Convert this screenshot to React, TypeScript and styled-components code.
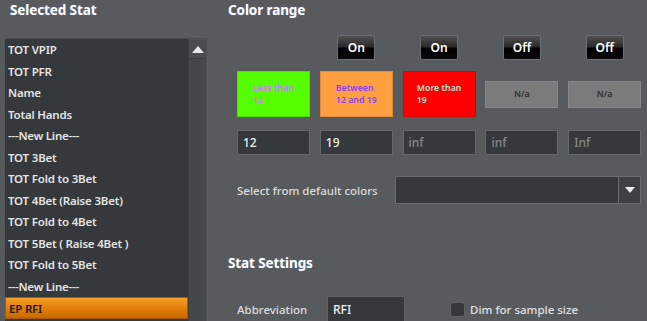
import React from "react";
import styled, { createGlobalStyle } from "styled-components";

const Global = createGlobalStyle`
  html, body { margin: 0; padding: 0; background: #585b5e; }
  body { font-family: "Noto Sans", "Open Sans", sans-serif; color: #e6e6e6; overflow: hidden; }
  * { box-sizing: border-box; }
`;

const Page = styled.div`
  display: flex;
  width: 647px;
  height: 321px;
  background: #585b5e;
  overflow: hidden;
`;

const LeftPanel = styled.div`
  width: 208px;
  display: flex;
  flex-direction: column;
  padding-left: 5px;
`;

const Title = styled.div`
  font-size: 13.5px;
  font-weight: 700;
  color: #ffffff;
  height: 38px;
  line-height: 20px;
  padding: 0 0 0 5px;
  text-shadow: 0 0 2px rgba(120, 160, 255, 0.35);
  letter-spacing: -0.1px;
`;

const ListBox = styled.div`
  display: flex;
  flex: 1;
  border-top: 1px solid #4a4d50;
`;

const List = styled.div`
  width: 183px;
  background: #36393c;
  display: flex;
  flex-direction: column;
`;

const Row = styled.div<{ $selected?: boolean }>`
  height: 21.5px;
  line-height: 21.5px;
  padding-left: 3px;
  font-size: 11.5px;
  font-weight: 600;
  color: ${(p) => (p.$selected ? "#1f1a12" : "#e4e4e4")};
  background: ${(p) =>
    p.$selected ? "linear-gradient(#f6a02a, #e07d06 55%, #c96800)" : "transparent"};
  border: ${(p) => (p.$selected ? "1px solid #a85800" : "none")};
  white-space: nowrap;
  letter-spacing: -0.2px;
`;

const Scrollbar = styled.div`
  width: 19px;
  background: #45484b;
  border-left: 1px solid #3c3f42;
  border-right: 1px solid #505356;
  display: flex;
  flex-direction: column;
`;

const ScrollButton = styled.div`
  height: 20px;
  border-bottom: 1px solid #3a3d40;
  border-top: 1px solid #4f5255;
  background: #4a4d50;
  display: flex;
  align-items: center;
  justify-content: center;
`;

const RightPanel = styled.div`
  flex: 1;
  padding-left: 20px;
  display: flex;
  flex-direction: column;
`;

const SectionTitle = styled(Title)`
  padding-left: 0;
  height: auto;
`;

const Indent = styled.div`
  padding-left: 9px;
`;

const Grid = styled.div<{ $top: number; $height: number }>`
  display: grid;
  grid-template-columns: repeat(5, 73px);
  column-gap: 9.8px;
  margin-top: ${(p) => p.$top}px;
  height: ${(p) => p.$height}px;
  align-items: center;
`;

const Cell = styled.div`
  display: flex;
  justify-content: center;
  align-items: center;
`;

const ToggleButton = styled.div`
  width: 38px;
  height: 25px;
  border: 1px solid #6c6f72;
  border-radius: 2px;
  background: linear-gradient(#505050 0%, #2c2c2c 45%, #000 55%, #0a0a0a 100%);
  color: #fff;
  font-size: 12px;
  font-weight: 600;
  display: flex;
  align-items: center;
  justify-content: center;
`;

const Swatch = styled.div<{ $bg: string; $fg: string; $na?: boolean }>`
  width: 73px;
  height: ${(p) => (p.$na ? 27 : 46)}px;
  background: ${(p) => p.$bg};
  color: ${(p) => p.$fg};
  border: 1px solid ${(p) => (p.$na ? "#858789" : "rgba(0,0,0,0.12)")};
  font-size: 8.8px;
  font-weight: 600;
  line-height: 12px;
  display: flex;
  align-items: center;
  justify-content: center;
`;

const SwatchText = styled.div`
  text-align: left;
`;

const Input = styled.div<{ $placeholder?: boolean; $width?: number }>`
  width: ${(p) => p.$width ?? 73}px;
  height: 25px;
  background: #36393c;
  border: 1px solid #66696c;
  color: ${(p) => (p.$placeholder ? "#85888b" : "#f0f0f0")};
  font-size: 12px;
  font-weight: 500;
  padding-left: 5px;
  display: flex;
  align-items: center;
`;

const SelectRow = styled.div`
  display: flex;
  align-items: center;
  margin-top: 21px;
  height: 28px;
`;

const Label = styled.div<{ $width: number }>`
  width: ${(p) => p.$width}px;
  font-size: 11.5px;
  color: #dcdcdc;
  font-weight: 500;
`;

const Dropdown = styled.div`
  width: 246px;
  height: 28px;
  background: #36393c;
  border: 1px solid #6a6d70;
  display: flex;
  justify-content: flex-end;
`;

const DropButton = styled.div`
  width: 22px;
  border-left: 1px solid #6a6d70;
  background: #3e4144;
  display: flex;
  align-items: center;
  justify-content: center;
`;

const StatTitle = styled(SectionTitle)`
  margin-top: 49px;
`;

const SettingsRow = styled.div`
  display: flex;
  align-items: center;
  margin-top: 23px;
`;

const AbbrInput = styled(Input)`
  height: 26px;
  border-color: #5e6164;
`;

const CheckLabel = styled.label`
  display: flex;
  align-items: center;
  gap: 5px;
  margin-left: 45px;
  font-size: 11.5px;
  color: #e0e0e0;
  font-weight: 500;
`;

const CheckBox = styled.span`
  width: 15px;
  height: 15px;
  border-radius: 3px;
  background: #36393c;
  border: 1px solid #5e6164;
`;

const items = [
  "TOT VPIP",
  "TOT PFR",
  "Name",
  "Total Hands",
  "---New Line---",
  "TOT 3Bet",
  "TOT Fold to 3Bet",
  "TOT 4Bet (Raise 3Bet)",
  "TOT Fold to 4Bet",
  "TOT 5Bet ( Raise 4Bet )",
  "TOT Fold to 5Bet",
  "---New Line---",
  "EP RFI",
];

const toggles = ["On", "On", "Off", "Off"];

const swatches = [
  { bg: "#55ff00", fg: "#c77dff", lines: ["Less than", "12"] },
  { bg: "#ff9f40", fg: "#8a3cff", lines: ["Between", "12 and 19"] },
  { bg: "#ff0000", fg: "#a8e6d6", lines: ["More than", "19"] },
  { bg: "#7b7b7b", fg: "#2e2e2e", lines: ["N/a"], na: true },
  { bg: "#7b7b7b", fg: "#2e2e2e", lines: ["N/a"], na: true },
];

const values = [
  { v: "12" },
  { v: "19" },
  { v: "inf", p: true },
  { v: "inf", p: true },
  { v: "Inf", p: true },
];

export default function App() {
  return (
    <Page>
      <Global />
      <LeftPanel>
        <Title>Selected Stat</Title>
        <ListBox>
          <List>
            {items.map((t, i) => (
              <Row key={i} $selected={i === items.length - 1}>
                {t}
              </Row>
            ))}
          </List>
          <Scrollbar>
            <ScrollButton>
              <svg width="12" height="7" viewBox="0 0 12 7">
                <path d="M6 0 L12 7 L0 7 Z" fill="#e8e8e8" />
              </svg>
            </ScrollButton>
          </Scrollbar>
        </ListBox>
      </LeftPanel>
      <RightPanel>
        <SectionTitle>Color range</SectionTitle>
        <Indent>
          <Grid $top={15} $height={25}>
            <Cell />
            {toggles.map((t, i) => (
              <Cell key={i}>
                <ToggleButton>{t}</ToggleButton>
              </Cell>
            ))}
          </Grid>
          <Grid $top={11} $height={46}>
            {swatches.map((s, i) => (
              <Swatch key={i} $bg={s.bg} $fg={s.fg} $na={s.na}>
                <SwatchText>
                  {s.lines.map((l, j) => (
                    <div key={j}>{l}</div>
                  ))}
                </SwatchText>
              </Swatch>
            ))}
          </Grid>
          <Grid $top={13} $height={25}>
            {values.map((v, i) => (
              <Input key={i} $placeholder={v.p}>
                {v.v}
              </Input>
            ))}
          </Grid>
          <SelectRow>
            <Label $width={158}>Select from default colors</Label>
            <Dropdown>
              <DropButton>
                <svg width="10" height="6" viewBox="0 0 10 6">
                  <path d="M0 0 L10 0 L5 6 Z" fill="#ececec" />
                </svg>
              </DropButton>
            </Dropdown>
          </SelectRow>
        </Indent>
        <StatTitle>Stat Settings</StatTitle>
        <Indent>
          <SettingsRow>
            <Label $width={90}>Abbreviation</Label>
            <AbbrInput $width={78}>RFI</AbbrInput>
            <CheckLabel>
              <CheckBox />
              Dim for sample size
            </CheckLabel>
          </SettingsRow>
        </Indent>
      </RightPanel>
    </Page>
  );
}
